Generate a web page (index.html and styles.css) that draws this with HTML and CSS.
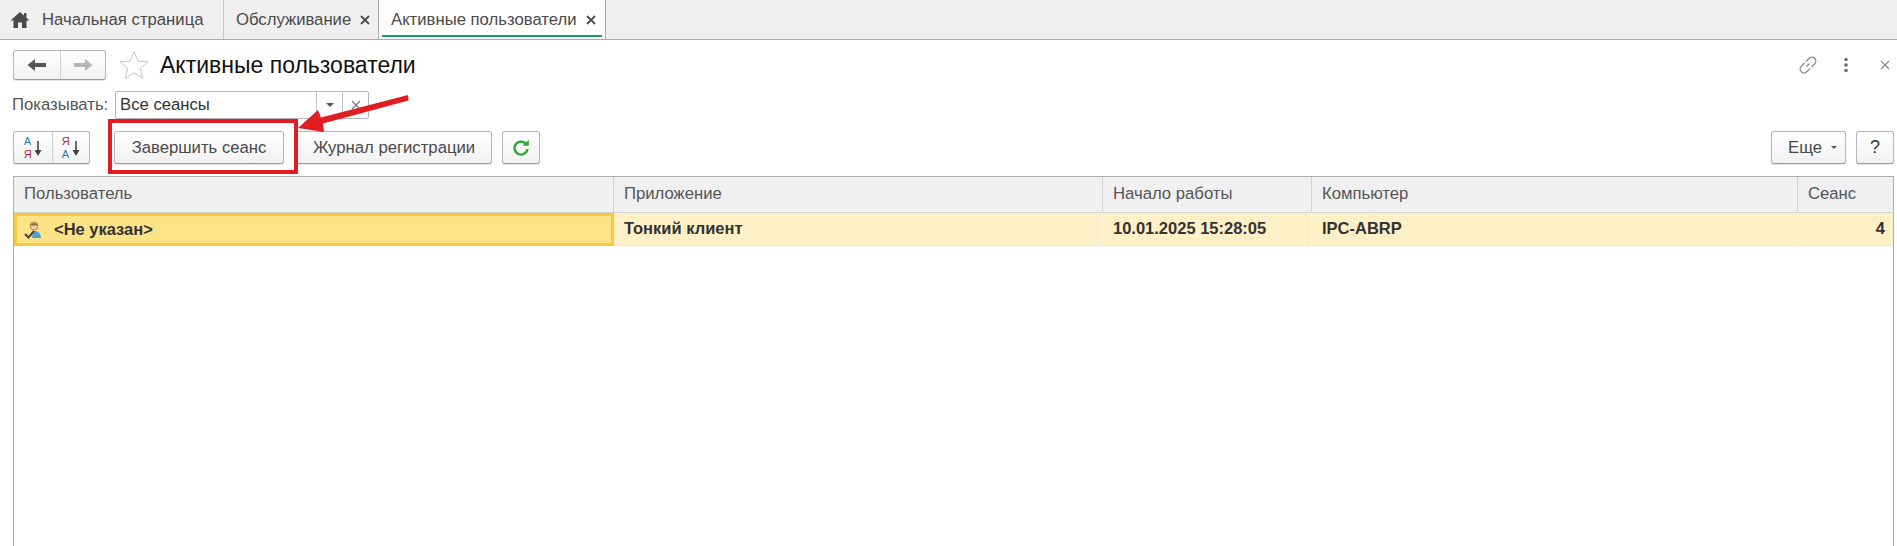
FILE: index.html
```html
<!DOCTYPE html>
<html lang="ru">
<head>
<meta charset="utf-8">
<title>Активные пользователи</title>
<link rel="stylesheet" href="styles.css">
</head>
<body>
<div class="page">
  <nav class="tabs">
    <div class="tab tab-home">
      <svg class="home-icon" viewBox="0 0 20 18" width="20" height="18"><path d="M10 1 0.500 9.500H3.500V17H8V11.500H12V17H16.500V9.500H19.500L16.500 6.800V2H14V4.600Z" fill="#4a4a4a"/></svg>
      <span>Начальная страница</span>
    </div>
    <div class="tab tab-service">
      <span>Обслуживание</span>
      <svg class="tab-close" viewBox="0 0 10 10" width="10" height="10"><path d="M1 1 9 9M9 1 1 9" stroke="#4a4a4a" stroke-width="1.800"/></svg>
    </div>
    <div class="tab tab-active">
      <span>Активные пользователи</span>
      <svg class="tab-close" viewBox="0 0 10 10" width="10" height="10"><path d="M1 1 9 9M9 1 1 9" stroke="#4a4a4a" stroke-width="1.800"/></svg>
      <i class="tab-line"></i>
    </div>
  </nav>

  <main class="content">
    <header class="title-row">
      <div class="btn-group nav-group">
        <div class="seg seg-nav">
          <svg viewBox="0 0 20 14" width="20" height="14"><path d="M0.500 7 8 1V5H19V9H8V13Z" fill="#555"/></svg>
        </div>
        <div class="seg seg-nav">
          <svg viewBox="0 0 20 14" width="20" height="14"><path d="M19.500 7 12 1V5H1V9H12V13Z" fill="#b4b4b4"/></svg>
        </div>
      </div>
      <svg class="star" viewBox="0 0 30 30" width="30" height="30"><path d="M15 1.500 19 11.200 29 11.800 21.300 18.300 23.800 28.300 15 22.800 6.200 28.300 8.700 18.300 1 11.800 11 11.200Z" fill="#fff" stroke="#c4c4c4"/></svg>
      <h1 class="title">Активные пользователи</h1>
      <div class="window-tools">
        <svg viewBox="0 0 20 20" width="20" height="20"><path d="M8.500 11.500 11.500 8.500M8 6.500 11 3.500C12.500 2 15 1.800 16.700 3.300 18.300 5 18 7.500 16.500 9L13.500 12M12 13.500 9 16.500C7.500 18 5 18.200 3.300 16.700 1.700 15 2 12.500 3.500 11L6.500 8" fill="none" stroke="#8a8a8a" stroke-width="1.300"/></svg>
        <svg class="dots" viewBox="0 0 6 16" width="6" height="16"><circle cx="3" cy="2.500" r="1.800" fill="#6e6e6e"/><circle cx="3" cy="8" r="1.800" fill="#6e6e6e"/><circle cx="3" cy="13.500" r="1.800" fill="#6e6e6e"/></svg>
        <svg viewBox="0 0 10 10" width="10" height="10"><path d="M1 1 9 9M9 1 1 9" stroke="#8a8a8a" stroke-width="1.200"/></svg>
      </div>
    </header>

    <div class="filter-row">
      <label class="filter-label">Показывать:</label>
      <div class="combo">
        <span class="combo-value">Все сеансы</span>
        <span class="combo-btn"><i class="caret"></i></span>
        <span class="combo-btn combo-clear">
          <svg viewBox="0 0 10 10" width="10" height="10"><path d="M1 1 9 9M9 1 1 9" stroke="#777" stroke-width="1.100"/></svg>
        </span>
      </div>
    </div>

    <div class="toolbar">
      <div class="btn-group sort-group">
        <div class="seg seg-sort">
          <span class="letters"><b class="blue">А</b><b class="red">Я</b></span>
          <svg class="sort-arrow" viewBox="0 0 8 16" width="8" height="16"><path d="M4 0V10" stroke="#444" stroke-width="1.600"/><path d="M0.500 9H7.500L4 15Z" fill="#444"/></svg>
        </div>
        <div class="seg seg-sort">
          <span class="letters"><b class="red">Я</b><b class="blue">А</b></span>
          <svg class="sort-arrow" viewBox="0 0 8 16" width="8" height="16"><path d="M4 0V10" stroke="#444" stroke-width="1.600"/><path d="M0.500 9H7.500L4 15Z" fill="#444"/></svg>
        </div>
      </div>
      <button class="btn btn-end">Завершить сеанс</button>
      <button class="btn btn-log">Журнал регистрации</button>
      <button class="btn btn-refresh">
        <svg viewBox="0 0 18 18" width="18" height="18"><path d="M14.500 5.500A6.500 6.500 0 1 0 15.500 10" fill="none" stroke="#2fa53a" stroke-width="2.400"/><path d="M10.500 6.800H16.800V0.800Z" fill="#2fa53a"/></svg>
      </button>
      <div class="toolbar-right">
        <button class="btn btn-more">Еще<i class="caret caret-small"></i></button>
        <button class="btn btn-help">?</button>
      </div>
    </div>

    <section class="table">
      <div class="cell head">Пользователь</div>
      <div class="cell head">Приложение</div>
      <div class="cell head">Начало работы</div>
      <div class="cell head">Компьютер</div>
      <div class="cell head">Сеанс</div>

      <div class="cell row current">
        <svg class="user-icon" viewBox="0 0 18 18" width="18" height="18">
          <path d="M9 10C13 9.500 16.500 11 17 17H8Z" fill="#4f9fd6"/>
          <circle cx="10" cy="5" r="4" fill="#f3cfa6" stroke="#a9793f" stroke-width="0.800"/>
          <path d="M6 4.500C7 1 13 1 14 4.500Z" fill="#9a6a32"/>
          <path d="M1 13 4.500 16.500 10 10" fill="none" stroke="#444" stroke-width="2"/>
        </svg>
        <span>&lt;Не указан&gt;</span>
      </div>
      <div class="cell row">Тонкий клиент</div>
      <div class="cell row">10.01.2025 15:28:05</div>
      <div class="cell row">IPC-ABRP</div>
      <div class="cell row num">4</div>
    </section>
  </main>

  <div class="callout-box"></div>
  <svg class="callout-arrow" viewBox="0 0 115 46" width="115" height="46">
    <path d="M0 38 20 20 23 27.500 110 5 110.500 10.500 25 33.500 26 42Z" fill="#e31b23"/>
  </svg>
</div>
</body>
</html>
```

FILE: styles.css
```css
* {
  box-sizing: border-box;
}

html,
body {
  margin: 0;
  height: 100%;
  background: #fff;
  overflow: hidden;
}

body {
  font-family: "Liberation Sans", Arial, sans-serif;
  font-size: 16.700px;
  color: #4a4a4a;
}

.page {
  position: relative;
  width: 1897px;
  height: 546px;
  overflow: hidden;
  display: flex;
  flex-direction: column;
}

/* Tabs */
.tabs {
  display: flex;
  height: 40px;
  flex: none;
  background: #efefef;
  border-bottom: 1px solid #a9a9a9;
}

.tab {
  position: relative;
  display: flex;
  align-items: center;
  height: 39px;
  white-space: nowrap;
  border-right: 1px solid #c6c6c6;
}

.tab-home {
  width: 224px;
  padding-left: 10px;
  gap: 12px;
}

.tab-service {
  width: 155px;
  padding-left: 12px;
  border-right-color: #a9a9a9;
}

.tab-close {
  flex: none;
  margin-left: 9px;
}

.tab-active {
  width: 227px;
  padding-left: 12px;
  background: #fff;
  border-right-color: #a9a9a9;
}

.tab-line {
  position: absolute;
  left: 3px;
  right: 3px;
  bottom: 2px;
  height: 2px;
  background: #1a9a66;
}

/* Content */
.content {
  flex: 1;
  min-height: 0;
  display: flex;
  flex-direction: column;
  padding: 10px 3px 0 13px;
}

.title-row {
  display: flex;
  align-items: center;
  height: 30px;
}

.btn-group {
  display: flex;
  border: 1px solid #b5b5b5;
  border-bottom-color: #9a9a9a;
  border-radius: 3px;
  background: linear-gradient(#fff, #f1f1f1);
  box-shadow: 0 1px 1px rgba(0, 0, 0, 0.12);
}

.seg {
  display: flex;
  align-items: center;
  justify-content: center;
}

.seg + .seg {
  border-left: 1px solid #d0d0d0;
}

.seg-nav {
  width: 45.500px;
  height: 28px;
}

.star {
  margin-left: 13px;
}

.title {
  margin: 0 0 0 11px;
  font-size: 23px;
  font-weight: 400;
  color: #111;
}

.window-tools {
  margin-left: auto;
  display: flex;
  align-items: center;
  padding-right: 4px;
}

.window-tools svg {
  flex: none;
}

.window-tools .dots {
  margin: 0 31px 0 25px;
}

/* Filter */
.filter-row {
  display: flex;
  align-items: center;
  height: 28px;
  margin-top: 11px;
  margin-left: -1px;
}

.filter-label {
  width: 103px;
  color: #555;
}

.combo {
  display: flex;
  align-items: stretch;
  width: 254px;
  height: 28px;
  border: 1px solid #b5b5b5;
  border-radius: 2px;
}

.combo-value {
  flex: 1;
  display: flex;
  align-items: center;
  padding-left: 4px;
  color: #333;
}

.combo-btn {
  width: 26px;
  display: flex;
  align-items: center;
  justify-content: center;
  border-left: 1px solid #c4c4c4;
}

.caret {
  display: block;
  width: 0;
  height: 0;
  border-left: 4px solid transparent;
  border-right: 4px solid transparent;
  border-top: 4px solid #555;
}

.caret-small {
  margin-left: 9px;
  border-left-width: 3px;
  border-right-width: 3px;
  border-top-width: 3px;
}

/* Toolbar */
.toolbar {
  display: flex;
  align-items: center;
  height: 33px;
  margin-top: 12px;
}

.sort-group {
  height: 33px;
}

.seg-sort {
  width: 37.500px;
  gap: 2px;
}

.letters {
  display: flex;
  flex-direction: column;
  font-size: 11px;
  line-height: 13px;
}

.letters b {
  font-weight: 400;
}

.sort-arrow {
  margin-top: 3px;
}

.blue {
  color: #2a78b8;
}

.red {
  color: #b3243a;
}

.btn {
  height: 33px;
  padding: 0;
  border: 1px solid #b5b5b5;
  border-bottom-color: #9a9a9a;
  border-radius: 3px;
  background: linear-gradient(#fff, #f1f1f1);
  box-shadow: 0 1px 1px rgba(0, 0, 0, 0.12);
  color: #4a4a4a;
  font: inherit;
  display: flex;
  align-items: center;
  justify-content: center;
}

.btn-end {
  width: 170px;
  margin-left: 24px;
}

.btn-log {
  width: 196px;
  margin-left: 12px;
}

.btn-refresh {
  width: 38px;
  margin-left: 10px;
}

.toolbar-right {
  margin-left: auto;
  display: flex;
  gap: 10px;
}

.btn-more {
  width: 75px;
  padding-left: 8px;
}

.btn-help {
  width: 38px;
  font-size: 18px;
  color: #333;
}

/* Table */
.table {
  flex: 1;
  margin-top: 12px;
  display: grid;
  grid-template-columns: 600px 489px 209px 486px 1fr;
  grid-auto-rows: min-content;
  border: 1px solid #adadad;
  border-bottom: 0;
}

.cell {
  display: flex;
  align-items: center;
  padding-left: 10px;
}

.head {
  height: 36px;
  padding-bottom: 2px;
  background: #f0f0f0;
  border-right: 1px solid #d2d2d2;
  border-bottom: 1px solid #d2d2d2;
  color: #555;
}

.head:nth-child(5),
.row:last-child {
  border-right: 0;
}

.row {
  height: 33px;
  padding-bottom: 2px;
  background: #fdf0c6;
  border-right: 1px solid #fff6dc;
  border-bottom: 1px solid #ece5d2;
  font-size: 16.500px;
  font-weight: 700;
  color: #333;
}

.current {
  background: #fde388;
  border: 3px solid #f8c93a;
  padding: 0 0 0 7px;
  gap: 12px;
}

.user-icon {
  flex: none;
}

.num {
  justify-content: flex-end;
  padding-right: 8px;
}

/* Annotation drawn over the screenshot */
.callout-box {
  position: absolute;
  left: 108px;
  top: 119px;
  width: 190px;
  height: 55px;
  border: 4.500px solid #e31b23;
}

.callout-arrow {
  position: absolute;
  left: 298px;
  top: 90px;
}
```
